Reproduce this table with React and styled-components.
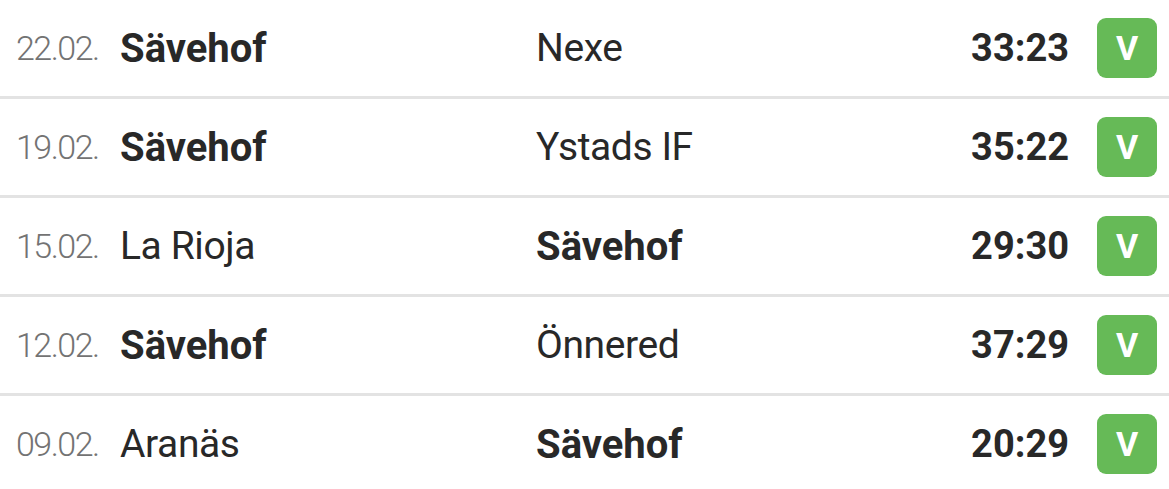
import styled, { createGlobalStyle } from 'styled-components';

const GlobalStyle = createGlobalStyle`
  html, body {
    margin: 0;
    padding: 0;
    background: #fff;
  }
  body {
    font-family: Roboto, "Noto Sans", sans-serif;
    color: #282828;
  }
`

const List = styled.div`
  display: flex;
  flex-direction: column;
`

const Row = styled.div`
  display: grid;
  grid-template-columns: 104px 416px 1fr auto 60px;
  align-items: center;
  height: 96px;
  padding: 0 12px 0 16px;
  border-bottom: 3px solid #e3e3e3;
  &:last-child {
    border-bottom: none;
  }
`

const Date = styled.span`
  font-size: 34px;
  font-weight: 300;
  color: #737373;
  letter-spacing: -1.5px;
`

const Team = styled.span`
  font-size: ${p => (p.$bold ? '40px' : '39px')};
  font-weight: ${p => (p.$bold ? 700 : 400)};
  letter-spacing: ${p => (p.$bold ? '0' : '-0.4px')};
`

const Score = styled.span`
  font-size: 38px;
  font-weight: 700;
  margin-right: 28px;
`

const Badge = styled.span`
  display: flex;
  align-items: center;
  justify-content: center;
  width: 60px;
  height: 60px;
  border-radius: 9px;
  background: #66ba57;
  color: #fff;
  font-size: 34px;
  font-weight: 700;
`

const games = [
  { date: '22.02.', home: 'Sävehof', away: 'Nexe', score: '33:23', bold: 'home' },
  { date: '19.02.', home: 'Sävehof', away: 'Ystads IF', score: '35:22', bold: 'home' },
  { date: '15.02.', home: 'La Rioja', away: 'Sävehof', score: '29:30', bold: 'away' },
  { date: '12.02.', home: 'Sävehof', away: 'Önnered', score: '37:29', bold: 'home' },
  { date: '09.02.', home: 'Aranäs', away: 'Sävehof', score: '20:29', bold: 'away' },
]

const App = () => {
  return (
    <>
      <GlobalStyle />
      <List>
        {games.map(g => (
          <Row key={g.date}>
            <Date>{g.date}</Date>
            <Team $bold={g.bold === 'home'}>{g.home}</Team>
            <Team $bold={g.bold === 'away'}>{g.away}</Team>
            <Score>{g.score}</Score>
            <Badge>V</Badge>
          </Row>
        ))}
      </List>
    </>
  );
}

export default App;
